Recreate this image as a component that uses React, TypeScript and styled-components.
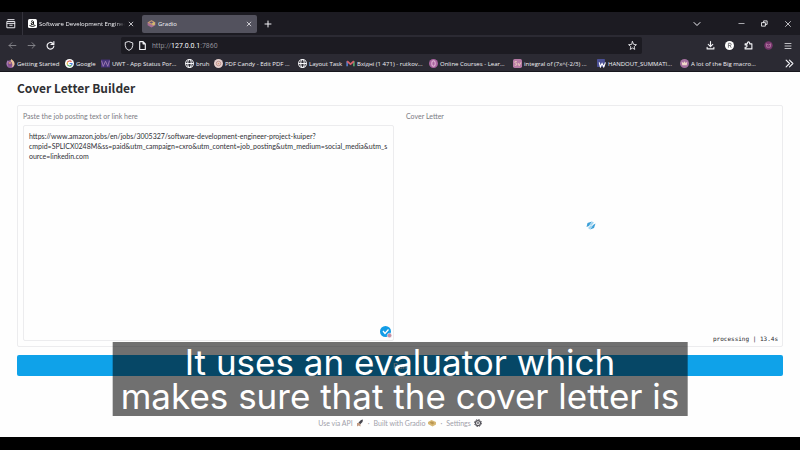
import React from 'react';
import styled, { createGlobalStyle } from 'styled-components';

const GlobalStyle = createGlobalStyle`
  *, *::before, *::after { box-sizing: border-box; }
  body { margin: 0; background: #000; }
  button, textarea { font: inherit; color: inherit; border: 0; background: none; padding: 0; margin: 0; }
  svg { display: block; flex: none; }
`;

const Screen = styled.div`
  position: relative;
  display: flex;
  flex-direction: column;
  min-height: 100vh;
  padding: 12px 0 13px;
  background: #000;
  font-family: "Lato", "Noto Sans", sans-serif;
`;

const Chrome = styled.header`
  background: #2b2a33;
  color: #f2f2f6;
  border-bottom: 1px solid #17161d;
  font: 6px/10px "Open Sans", "Noto Sans", sans-serif;
`;

const TabBar = styled.div`
  display: flex;
  align-items: center;
  height: 23px;
  background: #1c1b22;
`;

const Overview = styled.button`
  display: grid;
  place-items: center;
  width: 23px;
  height: 23px;
  border-right: 1px solid #34333c;
`;

const Tab = styled.div<{ $active?: boolean }>`
  display: flex;
  align-items: center;
  gap: 2px;
  width: 115px;
  height: 18px;
  margin-left: ${(p) => (p.$active ? 4 : 0)}px;
  padding: 0 ${(p) => (p.$active ? 5 : 4)}px 0 5px;
  border-radius: 2px;
  background: ${(p) => (p.$active ? '#53525e' : 'transparent')};
`;

const TabTitle = styled.span<{ $fade?: boolean }>`
  flex: 1;
  overflow: hidden;
  white-space: nowrap;
  mask-image: ${(p) => (p.$fade ? 'linear-gradient(90deg, #000 88%, transparent)' : 'none')};
`;

const IconButton = styled.button<{ $w?: number; $dim?: boolean }>`
  display: grid;
  place-items: center;
  flex: none;
  width: ${(p) => p.$w ?? 9}px;
  height: 16px;
  opacity: ${(p) => (p.$dim ? 0.5 : 1)};
`;

const WindowControls = styled.div`
  display: flex;
  margin-left: auto;
`;

const NavBar = styled.div`
  display: flex;
  align-items: center;
  height: 21px;
`;

const NavButtons = styled.div`
  display: flex;
  gap: 3px;
  margin-left: 4px;
  width: 117px;
`;

const AddressBar = styled.div`
  display: flex;
  flex: 1;
  align-items: center;
  gap: 4px;
  height: 17px;
  padding: 0 5px 0 3px;
  border-radius: 2px;
  background: #1c1b22;
`;

const Url = styled.span`
  flex: 1;
  margin-left: 1px;
  font: 7px/10px "Roboto", sans-serif;
  color: #8e8d96;
  b { font-weight: 400; color: #fbfbfe; }
`;

const Tools = styled.div`
  display: flex;
  margin-left: 59px;
  margin-right: 3px;
`;

const Bookmarks = styled.nav`
  display: flex;
  align-items: center;
  height: 15px;
  padding-left: 6px;
`;

const Bookmark = styled.a<{ $w: number }>`
  display: flex;
  align-items: center;
  gap: 2px;
  width: ${(p) => p.$w}px;
  color: inherit;
  text-decoration: none;
  white-space: nowrap;
`;

const More = styled.button`
  margin-left: auto;
  padding-right: 6px;
`;

const Page = styled.main`
  display: flex;
  flex: 1;
  flex-direction: column;
  padding: 7px 17px 0;
  background: #fefefe;
`;

const Title = styled.h1`
  margin: 0 0 9px;
  font: 700 12px/17px "Noto Sans CJK SC", "Noto Sans", sans-serif;
  color: #303033;
`;

const Panels = styled.div`
  display: grid;
  grid-template-columns: 1fr 1fr;
  flex: 1;
  border: 1px solid #ececee;
  border-radius: 2px;
`;

const PromptArea = styled.div`
  position: relative;
  display: flex;
`;

const PromptField = styled.label`
  display: flex;
  flex: 1;
  flex-direction: column;
  padding: 5px 6px 5px 5px;
  font-size: 7px;
  line-height: 10px;
  color: #7b7b84;
`;

const Prompt = styled.textarea`
  && {
    flex: 1;
    margin-top: 4px;
    padding: 5px;
    border: 1px solid #ececee;
    border-radius: 2px;
    color: #303036;
  }
  resize: none;
  outline: 0;
  overflow: hidden;
  word-break: break-all;
`;

const WriterBadge = styled.button`
  position: absolute;
  right: 8px;
  bottom: 8px;
`;

const Output = styled.section`
  display: grid;
  grid-template-rows: 10px 1fr 10px;
  padding: 5px 4px 2px 6px;
  font-size: 7px;
  line-height: 10px;
  color: #7b7b84;
`;

const OutputTitle = styled.h2`
  margin: 0;
  font: inherit;
`;

const Loader = styled.div`
  display: grid;
  place-items: center;
  padding: 0 3px 5px 0;
`;

const Status = styled.div`
  justify-self: end;
  font: 6px/10px "DejaVu Sans Mono", monospace;
  color: #27272a;
`;

const RunButton = styled.button`
  && {
    height: 21px;
    margin-top: 8px;
    border-radius: 2px;
    background: #0fa2e9;
    color: #fff;
    font-size: 8px;
  }
`;

const Footer = styled.footer`
  display: flex;
  align-items: center;
  justify-content: center;
  gap: 4px;
  height: 10px;
  margin: 42px 0 9px;
  font-size: 7px;
  line-height: 10px;
  color: #a1a1aa;
`;

const FooterLink = styled.a`
  display: flex;
  align-items: center;
  gap: 3px;
  color: inherit;
  text-decoration: none;
`;

const Caption = styled.p`
  position: absolute;
  left: 50%;
  bottom: 34px;
  transform: translateX(-50%);
  margin: 0;
  padding: 3px 8px;
  background: rgba(0, 0, 0, 0.56);
  color: #fff;
  font: 35px/34px "Inter", sans-serif;
  text-align: center;
  white-space: nowrap;
`;

const Line = ({ d, s = 9, w = 1.5 }: { d: string; s?: number; w?: number }) => (
  <svg width={s} height={s} viewBox="0 0 16 16" fill="none" stroke="currentColor" strokeWidth={w} strokeLinecap="round" strokeLinejoin="round">
    <path d={d} />
  </svg>
);

const CLOSE = 'M3 3l10 10M13 3L3 13';

const Amazon = () => (
  <svg width="9" height="9" viewBox="0 0 18 18">
    <rect width="18" height="18" rx="3" fill="#fff" />
    <path d="M6 5q3-3 5 0v6M11 7q-5 0-5 3 2 3 5 0l1 1M3 13q6 4 12 0" fill="none" stroke="#111" strokeWidth="2" />
  </svg>
);

const GradioMark = () => (
  <svg width="9" height="9" viewBox="0 0 16 16">
    <path d="M1 6l7-4 7 4v5l-7 4-7-4z" fill="#a66c95" />
    <path d="M1 6l7-4 7 4-7 4z" fill="#c9a06a" />
    <path d="M9 6l5 0v4l-4 2z" fill="#d3bd6d" />
    <path d="M4 6l4-2 3 2-3 2z" fill="#665577" />
  </svg>
);

const Globe = () => (
  <svg width="9" height="9" viewBox="0 0 16 16" fill="none" stroke="#f5f5f8" strokeWidth="1.8">
    <circle cx="8" cy="8" r="7" />
    <ellipse cx="8" cy="8" rx="3" ry="7" />
    <path d="M1 8h14" />
  </svg>
);

const Fox = () => (
  <svg width="9" height="9" viewBox="0 0 16 16">
    <circle cx="8" cy="9" r="7" fill="#8d5b9c" />
    <path d="M1 8Q1 4 3 2l2 3q-2 4 0 7l-2 1Q1 11 1 8" fill="#a87ab6" />
    <path d="M9 0q7 4 6 10-2 4-5 5 3-5 0-9-3-2-1-6" fill="#e8c49b" />
    <circle cx="7" cy="9" r="4" fill="#83508f" />
    <path d="M4 7q3-3 6 0l-3 2z" fill="#d69b72" />
  </svg>
);

const Google = () => (
  <svg width="9" height="9" viewBox="0 0 18 18">
    <circle cx="9" cy="9" r="9" fill="#fff" />
    <g fill="none" strokeWidth="2.4">
      <path d="M13 5.500a5 5 0 0 0-8 1" stroke="#e45b50" />
      <path d="M5 6.500a5 5 0 0 0 0 5" stroke="#e9b83e" />
      <path d="M5 11.500a5 5 0 0 0 8 1" stroke="#46a561" />
      <path d="M13 12.500a5 5 0 0 0 1-3.500H9" stroke="#4a80dd" />
    </g>
  </svg>
);

const Uw = () => (
  <svg width="9" height="9" viewBox="0 0 16 16">
    <rect y="1" width="16" height="14" fill="#48347c" />
    <path d="M1 3l3 10 4-9 4 9 3-10" fill="none" stroke="#a582b6" strokeWidth="1.500" />
  </svg>
);

const Candy = () => (
  <svg width="9" height="9" viewBox="0 0 16 16">
    <circle cx="8" cy="8" r="8" fill="#e5cfcd" />
    <circle cx="8" cy="8" r="4" fill="none" stroke="#b48985" strokeWidth="1.500" />
    <circle cx="8" cy="8" r="1.500" fill="#d59a78" />
  </svg>
);

const Gmail = () => (
  <svg width="9" height="9" viewBox="0 0 16 16" fill="none" strokeWidth="3">
    <path d="M2 13V4" stroke="#557bc7" />
    <path d="M14 13V4" stroke="#57a36d" />
    <path d="M2 4l6 5 6-5" stroke="#d6616b" />
  </svg>
);

const Disc = () => (
  <svg width="9" height="9" viewBox="0 0 16 16">
    <circle cx="8" cy="8" r="8" fill="#a8639f" />
    <ellipse cx="8" cy="8" rx="3" ry="5" fill="none" stroke="#e2b8d5" strokeWidth="1.800" />
  </svg>
);

const Symbolab = () => (
  <svg width="9" height="9" viewBox="0 0 16 16">
    <rect width="16" height="16" rx="3" fill="#b77aa6" />
    <path d="M7 5Q3 3 3 6l4 3q0 3-4 2M9 7l2 5 3-6" fill="none" stroke="#f1d4c0" strokeWidth="1.500" />
  </svg>
);

const WordDoc = () => (
  <svg width="9" height="9" viewBox="0 0 16 16">
    <rect width="14" height="14" rx="1" fill="#4a4f95" />
    <path d="M4 6l2 8 3-6 3 6 3-8" fill="none" stroke="#fff" strokeWidth="2" />
  </svg>
);

const Crown = () => (
  <svg width="9" height="9" viewBox="0 0 16 16">
    <circle cx="8" cy="8" r="8" fill="#a5709f" />
    <path d="M3 5l3 2 2-3 2 3 3-2-1 6H4z" fill="#f0d9c8" />
  </svg>
);

const bookmarks: [string, number, () => React.ReactElement][] = [
  ['Getting Started', 59, Fox],
  ['Google', 36, Google],
  ['UWT - App Status Por...', 84, Uw],
  ['bruh', 29, Globe],
  ['PDF Candy - Edit PDF ...', 84, Candy],
  ['Layout Task', 48, Globe],
  ['Вхідні (1 471) - rutkov...', 83, Gmail],
  ['Online Courses - Lear...', 84, Disc],
  ['integral of (7x^(-2/3) ...', 84, Symbolab],
  ['HANDOUT_SUMMATI...', 83, WordDoc],
  ['A lot of the Big macro...', 80, Crown],
];

export default function App() {
  return (
    <Screen>
      <GlobalStyle />
      <Chrome>
        <TabBar>
          <Overview aria-label="Recent browsing">
            <Line s={10} d="M3 1h10M2 4h12v10H2zM2 7h12M6 10h4" />
          </Overview>
          <Tab>
            <Amazon />
            <TabTitle $fade>Software Development Engineer</TabTitle>
            <IconButton aria-label="Close tab" $w={7}><Line s={6} w={2} d={CLOSE} /></IconButton>
          </Tab>
          <Tab $active>
            <GradioMark />
            <TabTitle>Gradio</TabTitle>
            <IconButton aria-label="Close tab" $w={7}><Line s={6} w={2} d={CLOSE} /></IconButton>
          </Tab>
          <IconButton aria-label="New tab" $w={22}><Line s={8} w={2} d="M8 2v12M2 8h12" /></IconButton>
          <WindowControls>
            <IconButton aria-label="List all tabs" $w={64}><Line s={8} w={2} d="M2 5l6 6 6-6" /></IconButton>
            <IconButton aria-label="Minimize" $w={24}><Line s={7} d="M2 8h12" /></IconButton>
            <IconButton aria-label="Restore" $w={23}><Line s={7} w={2} d="M2 6h8v8H2zM6 6V2h8v8h-4" /></IconButton>
            <IconButton aria-label="Close window" $w={24}><Line s={8} d={CLOSE} /></IconButton>
          </WindowControls>
        </TabBar>
        <NavBar>
          <NavButtons>
            <IconButton aria-label="Back" $w={16} $dim><Line d="M14 8H2M7 3L2 8l5 5" /></IconButton>
            <IconButton aria-label="Forward" $w={16} $dim><Line d="M2 8h12M9 3l5 5-5 5" /></IconButton>
            <IconButton aria-label="Reload" $w={16}><Line w={2} d="M14 9A6 6 0 1 1 12 4M14 1v5H9" /></IconButton>
          </NavButtons>
          <AddressBar>
            <Line s={10} d="M8 1l6 2v4q0 6-6 8Q2 13 2 7V3z" />
            <Line s={9} w={2} d="M3 1h6l4 4v10H3zM9 1v4h4" />
            <Url>http://<b>127.0.0.1</b>:7860</Url>
            <IconButton aria-label="Bookmark this page"><Line s={9} d="M8 1l2 5 5 .5-4 3.500 1 5-4-2.500L4 15l1-5-4-3.500L6 6z" /></IconButton>
          </AddressBar>
          <Tools>
            <IconButton aria-label="Downloads" $w={19}><Line s={9} w={2} d="M8 1v9M4 6l4 4 4-4M2 11v3h12v-3" /></IconButton>
            <IconButton aria-label="Extension" $w={19}>
              <svg width="9" height="9" viewBox="0 0 16 16"><circle cx="8" cy="8" r="8" fill="#fff" /><path d="M6 12V4h3q2 0 2 2T9 8H6m3 0l2 4" fill="none" stroke="#66656c" strokeWidth="1.500" /></svg>
            </IconButton>
            <IconButton aria-label="Extensions" $w={19}><Line s={9} w={2} d="M2 5h4V3q2-3 4 0v2h4v9H2v-3h2q3-2 0-4H2z" /></IconButton>
            <IconButton aria-label="Profile" $w={20}>
              <svg width="9" height="9" viewBox="0 0 16 16"><circle cx="8" cy="8" r="7.500" fill="#76356c" /><path d="M4 5l4 2 4-2-1 6H5z" fill="none" stroke="#b67ba5" strokeWidth="1.500" /></svg>
            </IconButton>
            <IconButton aria-label="Menu" $w={19}><Line s={8} d="M2 3h12M2 8h12M2 13h12" /></IconButton>
          </Tools>
        </NavBar>
        <Bookmarks>
          {bookmarks.map(([name, width, Icon]) => (
            <Bookmark key={name} href="#" $w={width}><Icon />{name}</Bookmark>
          ))}
          <More aria-label="More bookmarks"><Line s={9} w={2} d="M2 2l6 6-6 6M8 2l6 6-6 6" /></More>
        </Bookmarks>
      </Chrome>
      <Page>
        <Title>Cover Letter Builder</Title>
        <Panels>
          <PromptArea>
            <PromptField>
              Paste the job posting text or link here
              <Prompt
                spellCheck={false}
                defaultValue={'https://www.amazon.jobs/en/jobs/3005327/software-development-engineer-project-kuiper?\ncmpid=SPLICX0248M&ss=paid&utm_campaign=cxro&utm_content=job_posting&utm_medium=social_media&utm_source=linkedin.com'}
              />
            </PromptField>
            <WriterBadge aria-label="Check writing">
              <svg width="12" height="12" viewBox="0 0 24 24">
                <circle cx="11" cy="11" r="11" fill="#129ce6" />
                <path d="M6 10l4 5 7-8" fill="none" stroke="#fff" strokeWidth="2.500" />
                <circle cx="19" cy="19" r="4.500" fill="#c38fa4" stroke="#fff" />
              </svg>
            </WriterBadge>
          </PromptArea>
          <Output>
            <OutputTitle>Cover Letter</OutputTitle>
            <Loader>
              <svg width="10" height="9" viewBox="0 0 20 18">
                <path d="M1 12L3 4l9-3-6 9zM8 17l6-9 5-3-3 9z" fill="#3da0d8" />
                <path d="M7 8l5-7 4 2-5 6zM4 14l5-5 4 1-5 7z" fill="#a2d5f1" />
              </svg>
            </Loader>
            <Status>processing | 13.4s</Status>
          </Output>
        </Panels>
        <RunButton>Run</RunButton>
        <Footer>
          <FooterLink href="#">
            Use via API
            <svg width="8" height="8" viewBox="0 0 16 16"><path d="M5 7l5-5 4-1-1 5-5 5z" fill="#48474e" /><path d="M2 8h4l3 3v4l-4-2-3 2z" fill="#c29a80" /></svg>
          </FooterLink>
          <span>·</span>
          <FooterLink href="#">
            Built with Gradio
            <svg width="8" height="8" viewBox="0 0 16 16"><path d="M0 6l7-4 9 4v5l-7 4-9-5z" fill="#d7b875" /><path d="M3 7l5-2 5 3-4 3z" fill="#b99552" /></svg>
          </FooterLink>
          <span>·</span>
          <FooterLink href="#">
            Settings
            <svg width="8" height="8" viewBox="0 0 16 16" fill="none" stroke="#56555c"><circle cx="8" cy="8" r="5" strokeWidth="2.500" /><circle cx="8" cy="8" r="7" strokeWidth="2" strokeDasharray="3 2.500" /><circle cx="8" cy="8" r="1.500" fill="#56555c" /></svg>
          </FooterLink>
        </Footer>
      </Page>
      <Caption>It uses an evaluator which<br />makes sure that the cover letter is</Caption>
    </Screen>
  );
}
